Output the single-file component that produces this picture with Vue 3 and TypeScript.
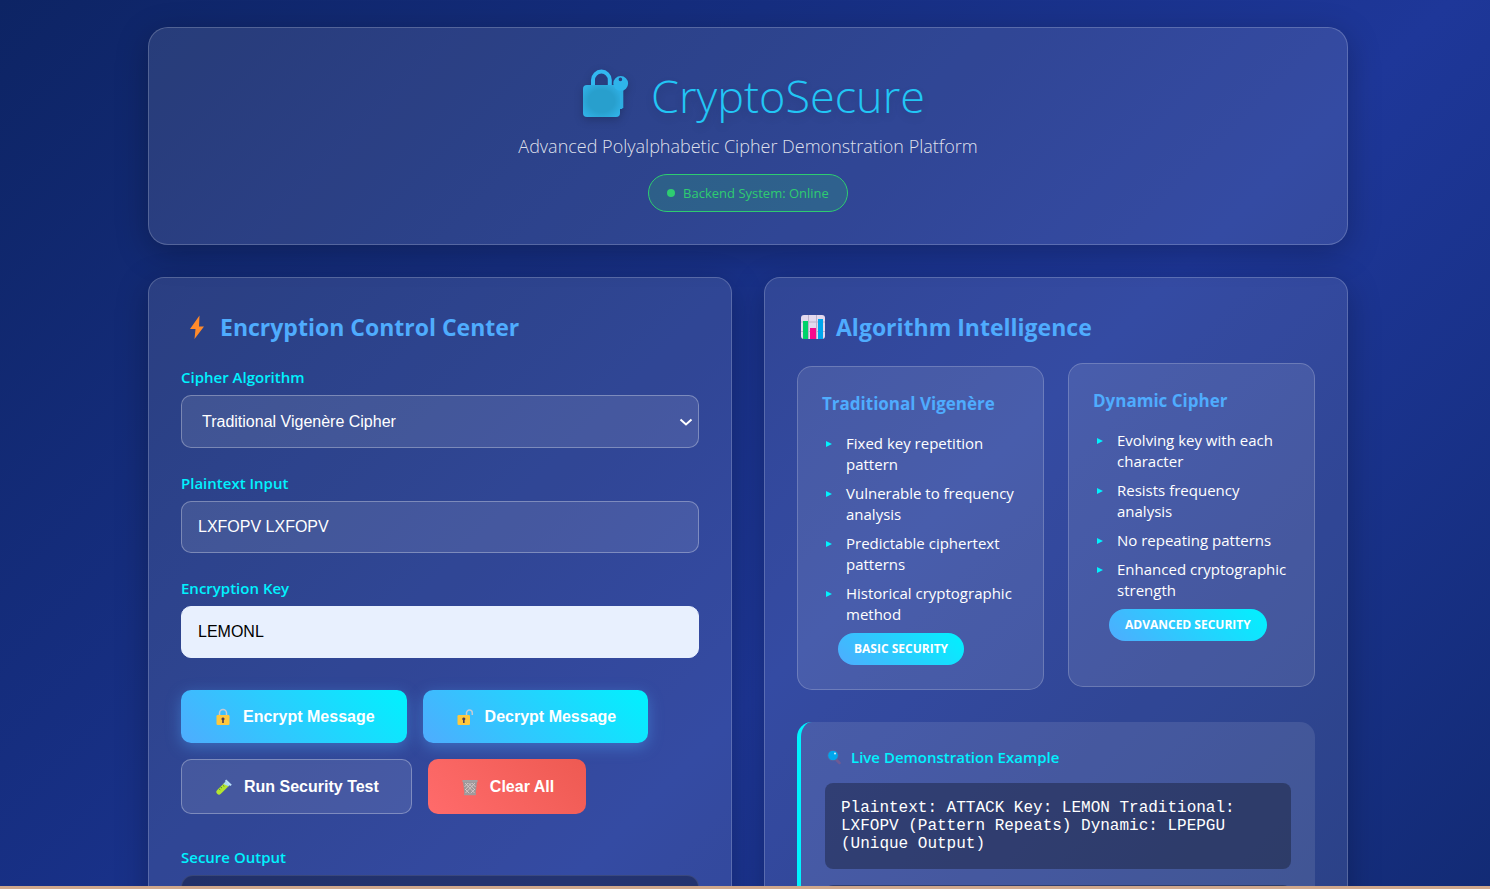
<script setup lang="ts">
import { ref } from 'vue'

interface Cipher {
  name: string
  raised: boolean
  features: string[]
  badge: string
}

const algorithm = ref('traditional')
const plaintext = ref('LXFOPV LXFOPV')
const cipherKey = ref('LEMONL')

const ciphers: Cipher[] = [
  {
    name: 'Traditional Vigenère',
    raised: false,
    features: [
      'Fixed key repetition pattern',
      'Vulnerable to frequency analysis',
      'Predictable ciphertext patterns',
      'Historical cryptographic method',
    ],
    badge: 'BASIC SECURITY',
  },
  {
    name: 'Dynamic Cipher',
    raised: true,
    features: [
      'Evolving key with each character',
      'Resists frequency analysis',
      'No repeating patterns',
      'Enhanced cryptographic strength',
    ],
    badge: 'ADVANCED SECURITY',
  },
]

function clearAll(): void {
  plaintext.value = ''
  cipherKey.value = ''
}
</script>

<template>
  <div class="page">
    <div class="container">
      <header class="hero glass">
        <h1>
          <svg class="logo" viewBox="-11 -1 58 54" aria-hidden="true">
            <defs>
              <radialGradient id="lockFill" cx="0.5" cy="0.5" r="0.7">
                <stop offset="0.5" stop-color="#289fcd" />
                <stop offset="1" stop-color="#32b6ed" />
              </radialGradient>
            </defs>
            <path d="M11 16V10a8.400 8.400 0 0 1 16.800 0V16" fill="none" stroke="#32b9f1" stroke-width="4" />
            <path d="M32 17h9.300v20.500l-1.500 1.500H32z" fill="#2eaee1" />
            <rect x="1" y="15" width="37" height="32" rx="4" fill="url(#lockFill)" />
            <path d="M38.700 6a7.400 7.400 0 1 0 0 14.800a7.400 7.400 0 0 0 0-14.800zM38.400 7.600a1.800 1.800 0 1 1 0 3.600a1.800 1.800 0 0 1 0-3.600z" fill="#2eb4ea" fill-rule="evenodd" />
          </svg>
          <span>CryptoSecure</span>
        </h1>
        <p class="tagline">Advanced Polyalphabetic Cipher Demonstration Platform</p>
        <div class="status"><span class="dot"></span>Backend System: Online</div>
      </header>

      <main class="columns">
        <section class="panel glass">
          <h2>
            <svg class="heading-icon" viewBox="0 0 32 32" aria-hidden="true">
              <path d="M18.500 4.500L9 18h5.500l-1 10L23 15.500h-5z" fill="#ff8a2b" />
            </svg>
            Encryption Control Center
          </h2>

          <div class="field">
            <label for="algorithm">Cipher Algorithm</label>
            <div class="select-wrap">
              <select id="algorithm" v-model="algorithm">
                <option value="traditional">Traditional Vigenère Cipher</option>
                <option value="dynamic">Dynamic Cipher</option>
              </select>
              <svg class="chevron" viewBox="0 0 14 8" aria-hidden="true">
                <path d="M1.500 1.500L7 6.500l5.500-5" fill="none" stroke="#fff" stroke-width="2" />
              </svg>
            </div>
          </div>
          <div class="field">
            <label for="plaintext">Plaintext Input</label>
            <input id="plaintext" v-model="plaintext" type="text" />
          </div>
          <div class="field">
            <label for="cipher-key">Encryption Key</label>
            <input id="cipher-key" v-model="cipherKey" class="filled" type="text" />
          </div>

          <div class="actions">
            <button type="button" class="btn primary">
              <svg viewBox="0 0 16 18" aria-hidden="true">
                <path d="M4.500 8V5a3.500 3.500 0 0 1 7 0v3" fill="none" stroke="#c3cbd6" stroke-width="1.500" />
                <rect x="1.500" y="7" width="13" height="10" rx="1.200" fill="#ffc83d" />
                <path d="M8 9.500a1.500 1.500 0 0 1 .8 2.800V15H7.200v-2.700A1.500 1.500 0 0 1 8 9.500z" fill="#4b3d52" />
              </svg>
              Encrypt Message
            </button>
            <button type="button" class="btn primary">
              <svg viewBox="0 0 16 18" aria-hidden="true">
                <path d="M9.500 8V5a2.900 2.900 0 0 1 5.800 0v2" fill="none" stroke="#c3cbd6" stroke-width="1.500" />
                <rect x="0.500" y="7" width="12.500" height="10" rx="1.200" fill="#ffc83d" />
                <path d="M6.800 9.500a1.500 1.500 0 0 1 .8 2.800V15H6v-2.700a1.500 1.500 0 0 1 .8-2.800z" fill="#4b3d52" />
              </svg>
              Decrypt Message
            </button>
            <button type="button" class="btn outline">
              <svg viewBox="0 0 16 18" aria-hidden="true">
                <path d="M9.500 3.800L1.200 12a2.600 2.600 0 0 0 3.700 3.800L13.300 7.500z" fill="#b4e52f" />
                <path d="M9.500 3.800L7.300 6l5.200 2.300 2-2z" fill="#a8d8f5" />
                <path d="M10.200 1.500l5.600 5.300-1.500 1.300-5.500-5.200z" fill="#b9e0fb" />
                <path d="M4.500 9l1.500 1M3 11l1.300.8M7 7.500l1.300.8" stroke="#4f8f2e" />
              </svg>
              Run Security Test
            </button>
            <button type="button" class="btn danger" @click="clearAll">
              <svg viewBox="0 0 16 18" aria-hidden="true">
                <path d="M1 4h14l-1.600 13H2.600z" fill="#9d9798" />
                <path d="M3 5l9.500 10M6.500 5l6.500 7M10 5l3.500 4M13 5L3.500 15M9.500 5L3 12M6 5L2.500 9M8 16l5-5M8 16l-5-5" stroke="#d8c9ca" stroke-width="0.900" />
                <rect x="0.300" y="2" width="15.400" height="2.300" rx="0.800" fill="#a3a0a3" />
                <rect x="2" y="15.300" width="12" height="1.900" rx="0.700" fill="#a09a9c" />
              </svg>
              Clear All
            </button>
          </div>

          <h3 id="output-title" class="output-label">Secure Output</h3>
          <div class="output" role="region" aria-labelledby="output-title"></div>
        </section>

        <section class="panel glass">
          <h2>
            <svg class="heading-icon" viewBox="0 0 32 32" aria-hidden="true">
              <rect x="4" y="4" width="24" height="24" rx="3" fill="#e3d9ee" />
              <path d="M11.500 4v24M19.500 4v24M4 11h24M4 20.500h24" stroke="#bdb2ca" />
              <rect x="6" y="10" width="5" height="18" fill="#00d26a" />
              <rect x="13" y="17" width="6" height="11" fill="#f70a8d" />
              <rect x="21" y="8" width="5" height="20" fill="#00a6ed" />
            </svg>
            Algorithm Intelligence
          </h2>

          <div class="cards">
            <article v-for="c in ciphers" :key="c.name" class="card" :class="{ raised: c.raised }">
              <h3>{{ c.name }}</h3>
              <ul>
                <li v-for="f in c.features" :key="f">{{ f }}</li>
              </ul>
              <span class="badge">{{ c.badge }}</span>
            </article>
          </div>

          <div class="demo">
            <h4>
              <svg viewBox="0 0 16 16" aria-hidden="true">
                <path d="M10.500 10l4 4" stroke="#6f5a94" stroke-width="2.500" stroke-linecap="round" />
                <circle cx="8" cy="6.500" r="5.300" fill="#00a6ed" stroke="#5a5f9c" />
                <circle cx="10" cy="4.500" r="1" fill="#d3f0ff" />
              </svg>
              Live Demonstration Example
            </h4>
            <p class="code">Plaintext: ATTACK Key: LEMON Traditional: LXFOPV (Pattern Repeats) Dynamic: LPEPGU (Unique Output)</p>
            <p class="code"></p>
          </div>
        </section>
      </main>
    </div>
    <div class="strip"></div>
  </div>
</template>

<style>
body {
  margin: 0;
  background: #0c2461;
}
</style>

<style scoped>
* {
  box-sizing: border-box;
}
.page {
  height: 100vh;
  overflow: hidden;
  padding: 27px 16px 0 22px;
  background: linear-gradient(135deg, #0d2464 0%, #1e3799 61%, #0c2461 122%);
  color: #fff;
  font-family: 'Segoe UI', 'Open Sans', 'Noto Sans', sans-serif;
}
.container {
  max-width: 1200px;
  margin: 0 auto;
}
.glass {
  background: rgba(255, 255, 255, 0.1);
  border: 1px solid rgba(255, 255, 255, 0.2);
  box-shadow: 0 8px 32px rgba(0, 0, 0, 0.25);
}
.hero {
  display: flex;
  flex-direction: column;
  align-items: center;
  padding: 32px;
  border-radius: 20px;
}
h1 {
  display: flex;
  align-items: center;
  gap: 22px;
  margin: 0;
  font-size: 45px;
  font-weight: 300;
  line-height: 72px;
  color: #22c6f5;
  text-shadow: 0 4px 8px rgba(0, 0, 0, 0.15);
}
.logo {
  width: 58px;
  height: 54px;
  filter: drop-shadow(0 3px 4px rgba(0, 0, 0, 0.2));
}
.tagline {
  margin: 0;
  font-size: 18px;
  font-weight: 300;
  line-height: 28px;
  color: rgba(255, 255, 255, 0.85);
}
.status {
  display: flex;
  align-items: center;
  gap: 8px;
  height: 38px;
  margin-top: 14px;
  padding: 0 18px;
  border: 1px solid #2ecc71;
  border-radius: 25px;
  background: rgba(46, 204, 113, 0.2);
  font-size: 13px;
  color: #2ecc71;
}
.dot {
  width: 8px;
  height: 8px;
  border-radius: 50%;
  background: #2ecc71;
}
.columns {
  display: grid;
  grid-template-columns: 1fr 1fr;
  gap: 32px;
  margin-top: 32px;
}
.panel {
  min-width: 0;
  padding: 32px;
  border-radius: 16px;
}
h2,
.card h3 {
  font-weight: 700;
  color: #4facfe;
}
h2 {
  display: flex;
  align-items: center;
  gap: 7px;
  margin: 0 0 22px;
  font-size: 23px;
  line-height: 34px;
}
.heading-icon {
  width: 32px;
  height: 32px;
}
.field {
  margin-bottom: 24px;
}
label,
.output-label,
h4 {
  display: block;
  margin: 0 0 7px;
  font-size: 15px;
  font-weight: 600;
  line-height: 22px;
  color: #00f2fe;
}
.select-wrap {
  position: relative;
}
.chevron {
  position: absolute;
  top: 23px;
  right: 6px;
  width: 14px;
  height: 8px;
  pointer-events: none;
}
select,
input {
  display: block;
  width: 100%;
  height: 52px;
  padding: 0 16px;
  border: 1px solid rgba(255, 255, 255, 0.3);
  border-radius: 10px;
  outline: none;
  background: rgba(255, 255, 255, 0.1);
  color: #fff;
  font-family: 'Liberation Sans', sans-serif;
  font-size: 16px;
}
select {
  appearance: none;
  height: 53px;
  padding: 0 20px;
}
option {
  color: #000;
}
input.filled {
  border-color: #e8f0fe;
  background: #e8f0fe;
  color: #000;
}
.actions {
  display: flex;
  flex-wrap: wrap;
  gap: 16px;
  margin: 32px 0;
}
.btn {
  display: flex;
  align-items: center;
  gap: 10px;
  min-height: 53px;
  padding: 0 32px;
  border: 0;
  border-radius: 10px;
  color: #fff;
  font-family: 'Liberation Sans', sans-serif;
  font-size: 16px;
  font-weight: 700;
  cursor: pointer;
}
.btn svg {
  width: 20px;
  height: 18px;
}
.primary {
  background: linear-gradient(45deg, #4facfe 0%, #00f2fe 100%);
  box-shadow: 0 4px 15px rgba(79, 172, 254, 0.4);
}
.outline {
  min-height: 55px;
  border: 1px solid rgba(255, 255, 255, 0.3);
  background: rgba(255, 255, 255, 0.1);
}
.danger {
  background: linear-gradient(45deg, #ff6b6b, #ee5a52);
}
.output {
  height: 120px;
  border: 1px solid rgba(255, 255, 255, 0.1);
  border-radius: 12px;
  background: rgba(0, 0, 0, 0.3);
}
.cards {
  display: grid;
  grid-template-columns: 1fr 1fr;
  gap: 24px;
}
.card {
  min-width: 0;
  padding: 24px;
  border: 1px solid rgba(255, 255, 255, 0.2);
  border-radius: 15px;
  background: rgba(255, 255, 255, 0.1);
}
.raised {
  transform: translateY(-3px);
}
.card h3 {
  margin: 0 0 16px;
  font-size: 17px;
  line-height: 26px;
}
ul {
  margin: 0;
  padding: 0;
  list-style: none;
}
li {
  position: relative;
  margin-bottom: 8px;
  padding-left: 24px;
  font-size: 15px;
  line-height: 21px;
}
li::before {
  content: '';
  position: absolute;
  top: 8px;
  left: 4px;
  border-top: 3px solid transparent;
  border-bottom: 3px solid transparent;
  border-left: 6px solid #00f2fe;
}
.badge {
  display: block;
  width: fit-content;
  margin-left: 16px;
  padding: 0 16px;
  border-radius: 20px;
  background: linear-gradient(45deg, #4facfe 0%, #00f2fe 100%);
  font-size: 12px;
  font-weight: 700;
  line-height: 32px;
}
.demo {
  margin-top: 32px;
  padding: 24px;
  border-left: 4px solid #00f2fe;
  border-radius: 15px;
  background: rgba(255, 255, 255, 0.1);
}
.demo h4 {
  display: flex;
  align-items: center;
  gap: 10px;
  margin-bottom: 15px;
}
.demo svg {
  width: 16px;
  height: 16px;
}
.code {
  min-height: 86px;
  margin: 0 0 16px;
  padding: 16px;
  border-radius: 8px;
  background: rgba(0, 0, 0, 0.3);
  font-family: 'Courier New', 'Liberation Mono', monospace;
  font-size: 16px;
  line-height: 18px;
}
.strip {
  position: fixed;
  right: 0;
  bottom: 0;
  left: 0;
  height: 3px;
  background: #d0a88c;
}
</style>
